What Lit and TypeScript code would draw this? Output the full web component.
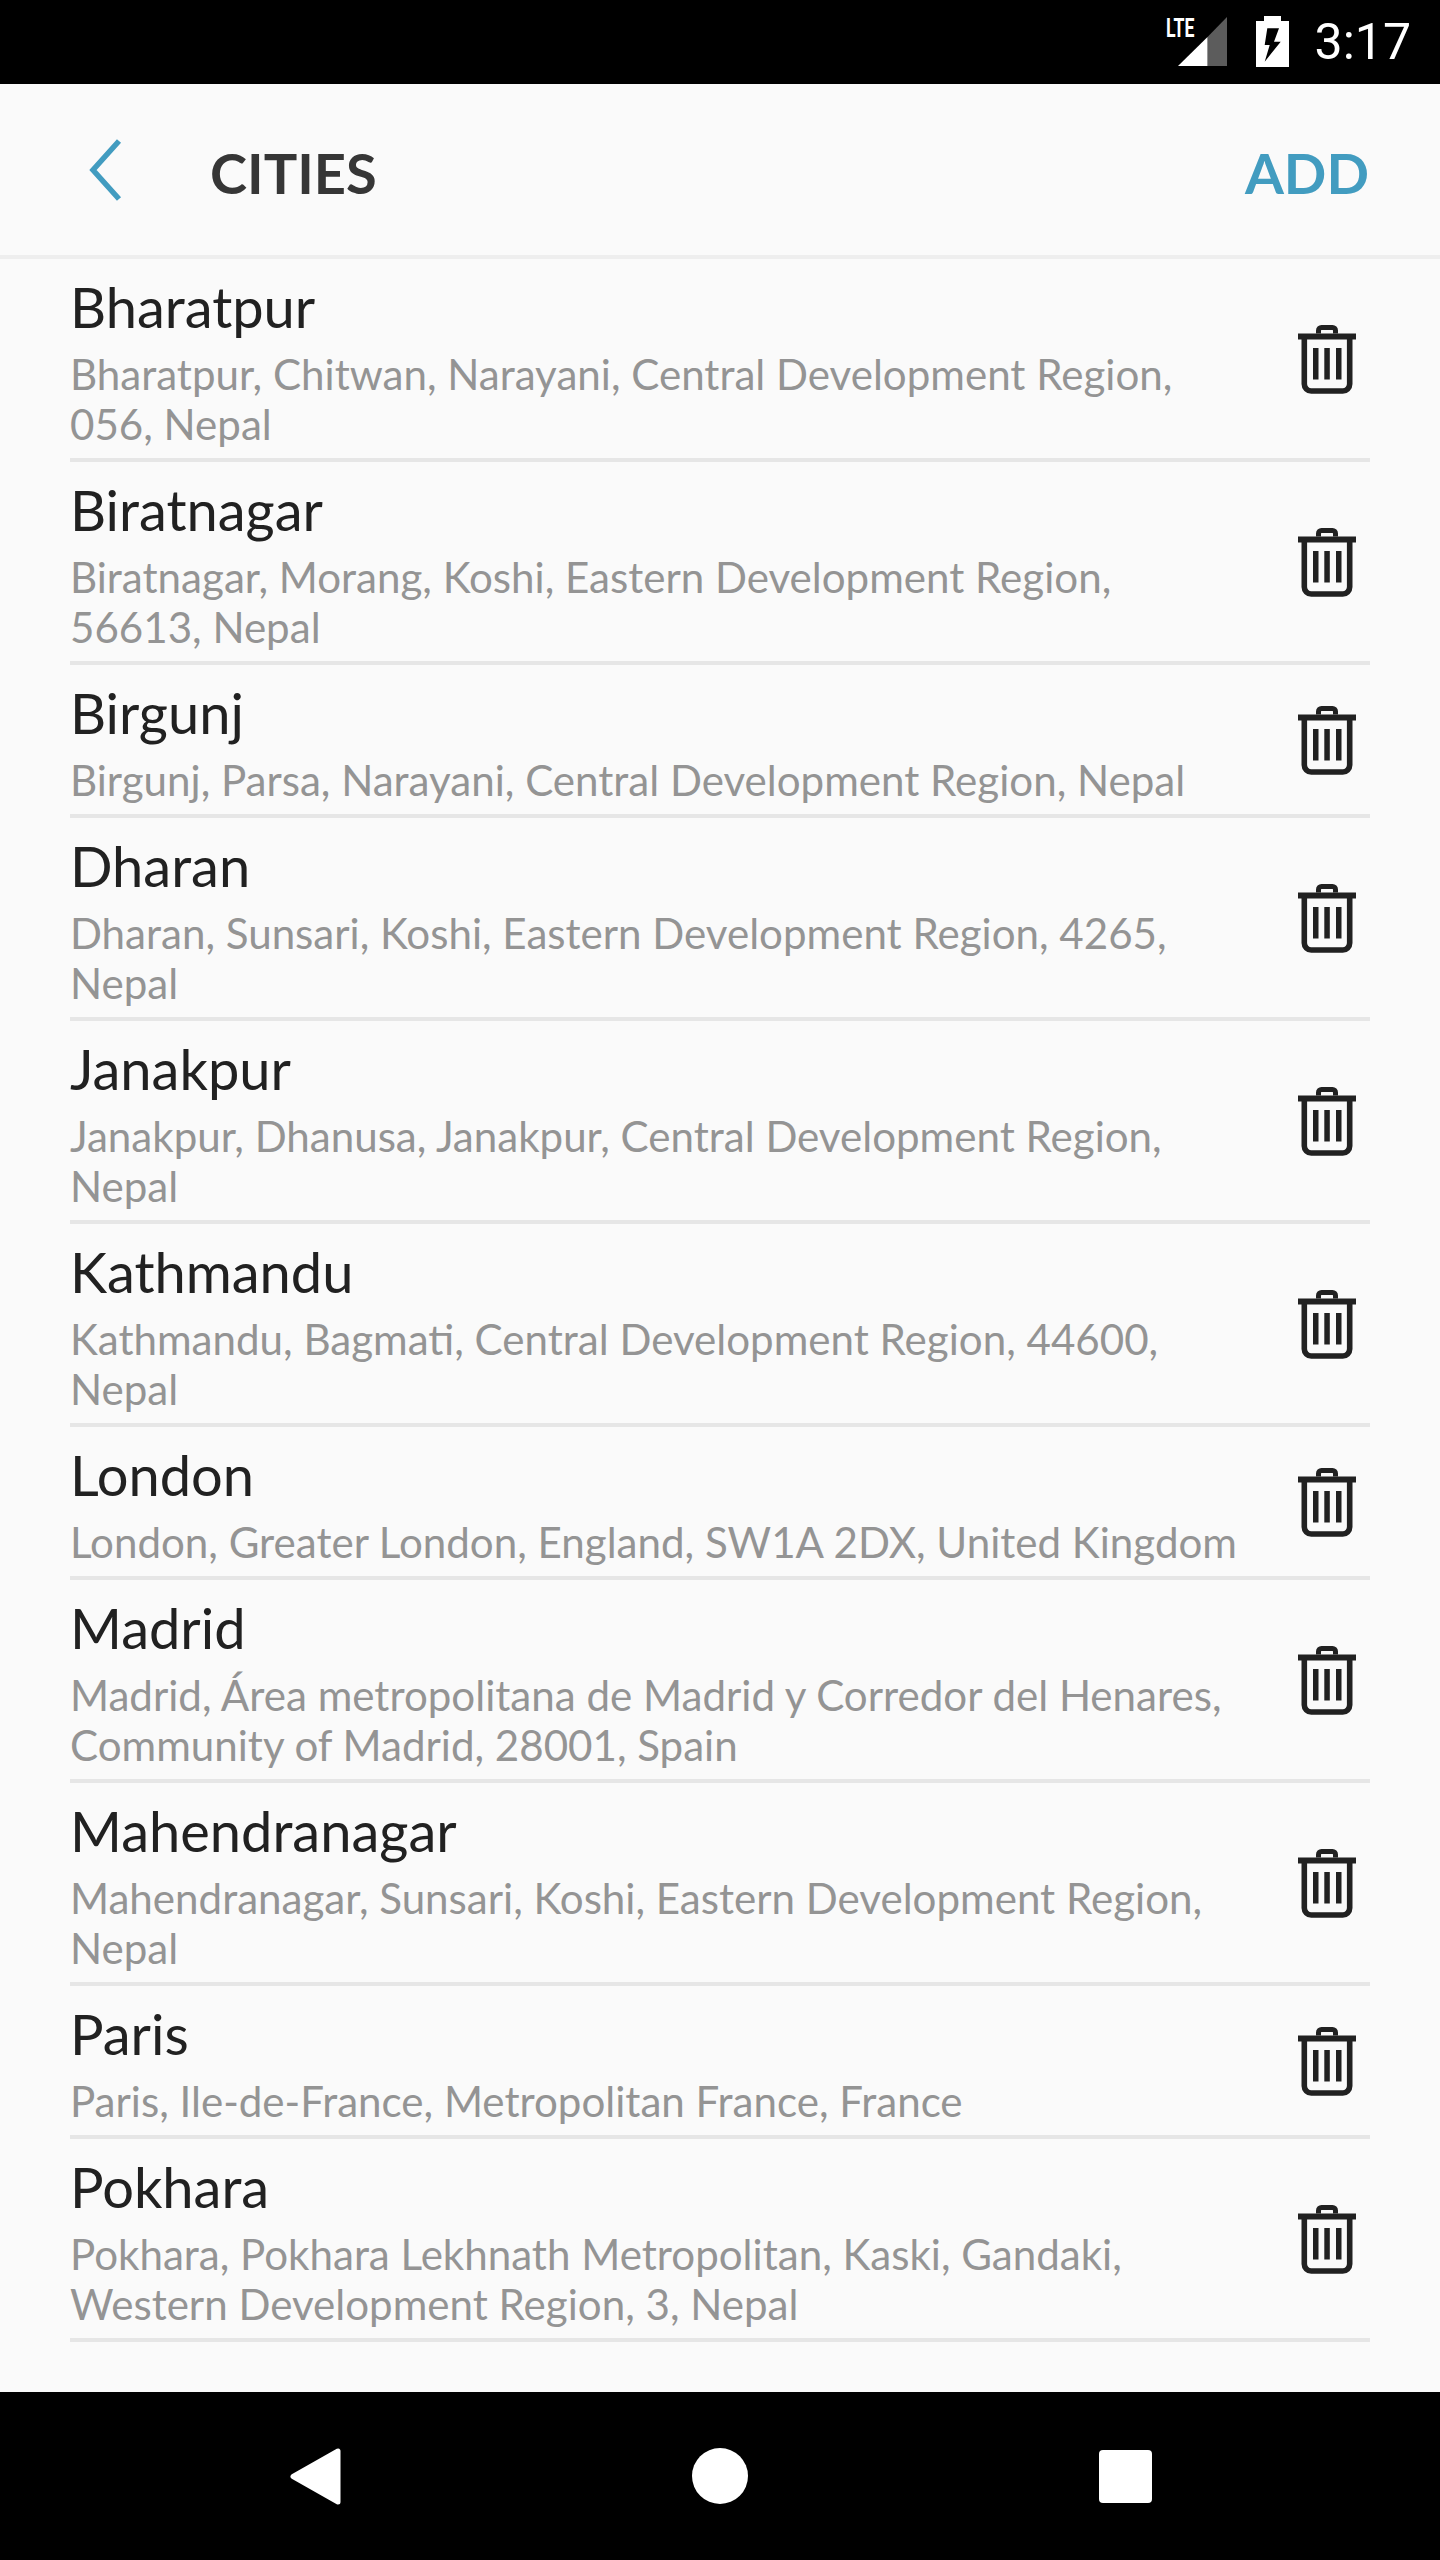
import { LitElement, html, css, svg } from 'lit';
import { customElement } from 'lit/decorators.js';

const cities = [
  { name: 'Bharatpur', lines: ['Bharatpur, Chitwan, Narayani, Central Development Region,', '056, Nepal'] },
  { name: 'Biratnagar', lines: ['Biratnagar, Morang, Koshi, Eastern Development Region,', '56613, Nepal'] },
  { name: 'Birgunj', lines: ['Birgunj, Parsa, Narayani, Central Development Region, Nepal'] },
  { name: 'Dharan', lines: ['Dharan, Sunsari, Koshi, Eastern Development Region, 4265,', 'Nepal'] },
  { name: 'Janakpur', lines: ['Janakpur, Dhanusa, Janakpur, Central Development Region,', 'Nepal'] },
  { name: 'Kathmandu', lines: ['Kathmandu, Bagmati, Central Development Region, 44600,', 'Nepal'] },
  { name: 'London', lines: ['London, Greater London, England, SW1A 2DX, United Kingdom'] },
  { name: 'Madrid', lines: ['Madrid, Área metropolitana de Madrid y Corredor del Henares,', 'Community of Madrid, 28001, Spain'] },
  { name: 'Mahendranagar', lines: ['Mahendranagar, Sunsari, Koshi, Eastern Development Region,', 'Nepal'] },
  { name: 'Paris', lines: ['Paris, Ile-de-France, Metropolitan France, France'] },
  { name: 'Pokhara', lines: ['Pokhara, Pokhara Lekhnath Metropolitan, Kaski, Gandaki,', 'Western Development Region, 3, Nepal'] },
];

const trash = svg`
  <path d="M20.500 8.500V5.500a3 3 0 0 1 3-3h11a3 3 0 0 1 3 3v3" fill="none" stroke="#212121" stroke-width="5"/>
  <rect x="0" y="8.500" width="58" height="6" fill="#212121"/>
  <path d="M6.300 12v47a7 7 0 0 0 7 7h31.400a7 7 0 0 0 7-7V12" fill="none" stroke="#212121" stroke-width="5.600"/>
  <rect x="15" y="23" width="5.500" height="31.500" fill="#212121"/>
  <rect x="26.300" y="23" width="5.500" height="31.500" fill="#212121"/>
  <rect x="38" y="23" width="5.500" height="31.500" fill="#212121"/>
`;

@customElement('app-root')
export class AppRoot extends LitElement {
  static styles = css`
    :host {
      display: flex;
      flex-direction: column;
      height: 2560px;
      background: #fafafa;
      font-family: Lato, 'Liberation Sans', sans-serif;
    }
    .status {
      height: 84px;
      flex: none;
      background: #000;
      display: flex;
      align-items: center;
      justify-content: flex-end;
      padding-right: 29px;
      color: #fff;
      position: relative;
    }
    .lte {
      position: absolute;
      left: 1166px;
      top: 13px;
      font: 700 26px/30px Roboto, sans-serif;
      transform: scaleX(0.68);
      transform-origin: left center;
    }
    .signal {
      margin-right: 29px;
      margin-top: -1px;
    }
    .battery {
      margin-right: 26px;
      margin-top: -1px;
    }
    .time {
      font: 400 50px/84px Roboto, sans-serif;
    }
    .header {
      height: 175px;
      flex: none;
      box-sizing: border-box;
      border-bottom: 4px solid #eeeeee;
      display: flex;
      align-items: center;
      padding: 5px 71px 0 88px;
    }
    .back {
      margin: -4px 86px 0 0;
      display: block;
    }
    .title {
      font-size: 56px;
      font-weight: 700;
      color: #363636;
      flex: 1;
    }
    .add {
      font-size: 56px;
      font-weight: 700;
      color: #429cc0;
    }
    .list {
      flex: 1;
      padding: 0 70px;
    }
    .row {
      display: flex;
      align-items: center;
      justify-content: space-between;
      border-bottom: 4px solid #e6e6e6;
      padding: 16px 0 9px;
    }
    .name {
      font-size: 56px;
      line-height: 64px;
      margin-bottom: 10px;
      color: #212121;
    }
    .sub {
      font-size: 42.100px;
      line-height: 50px;
      color: #949494;
      white-space: nowrap;
    }
    .trash {
      display: block;
      margin: -5px 14px 0 0;
      flex: none;
    }
    .nav {
      height: 168px;
      flex: none;
      background: #000;
      display: flex;
      align-items: center;
      justify-content: space-between;
      padding: 0 288px 0 290px;
    }
    .nav svg {
      display: block;
    }
    .circle {
      width: 56px;
      height: 56px;
      border-radius: 50%;
      background: #fff;
    }
    .square {
      width: 53px;
      height: 53px;
      border-radius: 4px;
      background: #fff;
    }
  `;

  render() {
    return html`
      <div class="status">
        <span class="lte">LTE</span>
        <svg class="signal" width="49" height="49" viewBox="0 0 49 49">
          <path d="M49 0V49H29.500V20Z" fill="#5c5c5c"/>
          <path d="M29.500 20V49H0Z" fill="#fff"/>
        </svg>
        <svg class="battery" width="33" height="51" viewBox="0 0 33 51">
          <path d="M8 0H25V5H33V51H0V5H8Z" fill="#fff"/>
          <path d="M11.300 12.300H23L18 25.700H24.700L8.700 45.700L13.700 29H8.700Z" fill="#000"/>
        </svg>
        <span class="time">3:17</span>
      </div>
      <div class="header">
        <svg class="back" width="36" height="64" viewBox="0 0 36 64">
          <path d="M31 3L5 32L31 61" fill="none" stroke="#429cc0" stroke-width="5.500"/>
        </svg>
        <span class="title">CITIES</span>
        <span class="add">ADD</span>
      </div>
      <div class="list">
        ${cities.map(
          (c) => html`
            <div class="row">
              <div>
                <div class="name">${c.name}</div>
                ${c.lines.map((l) => html`<div class="sub">${l}</div>`)}
              </div>
              <svg class="trash" width="58" height="69" viewBox="0 0 58 69">${trash}</svg>
            </div>
          `
        )}
      </div>
      <div class="nav">
        <svg width="51" height="57" viewBox="0 0 51 57">
          <path d="M48 3V54L3 28.500Z" fill="#fff" stroke="#fff" stroke-width="5" stroke-linejoin="round"/>
        </svg>
        <div class="circle"></div>
        <div class="square"></div>
      </div>
    `;
  }
}
